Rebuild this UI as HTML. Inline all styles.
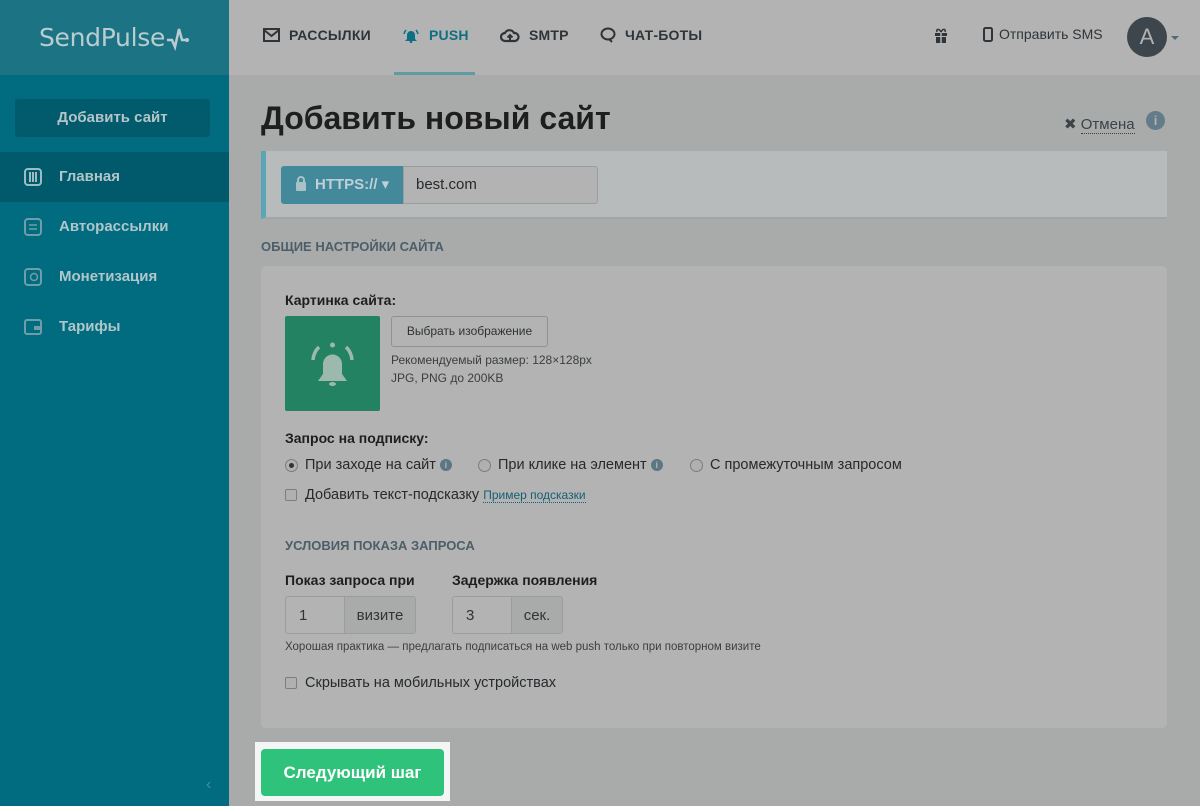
<!DOCTYPE html>
<html><head><meta charset="utf-8"><style>
*{box-sizing:border-box;margin:0;padding:0}
body{width:1200px;height:806px;overflow:hidden;background:#a9abab;font-family:"Liberation Sans","DejaVu Sans",sans-serif;position:relative;color:#2b2b2b}
.side{position:absolute;left:0;top:0;width:229px;height:806px;background:#016b7f}
.logo{height:75px;background:#1b7384;color:#b9cdd1;font-size:25px;font-family:"DejaVu Sans",sans-serif;display:flex;align-items:center;justify-content:center;letter-spacing:-.3px}
.addbtn{position:absolute;left:15px;top:99px;width:195px;height:38px;background:#025b6c;border-radius:3px;color:#b4c5c9;font-size:15px;font-weight:bold;text-align:center;line-height:38px}
.mi{position:absolute;left:0;width:229px;height:50px;line-height:50px;color:#b1c6ca;font-weight:bold;font-size:15px;padding-left:59px}
.mi svg{position:absolute;left:24px;top:16px}
.top{position:absolute;left:229px;top:0;width:971px;height:75px;background:#b3b3b3}
.nav{position:absolute;top:27px;font-size:14px;color:#2e3438;font-weight:bold;letter-spacing:.2px;display:flex;align-items:center}
.nav svg{margin-right:9px}
.title{position:absolute;left:261px;top:100px;font-size:32px;font-weight:bold;color:#1e1e1e}
.card{position:absolute;background:#b3b3b3;border-radius:5px}
.lbl{position:absolute;font-size:14px;font-weight:bold;color:#1e1e1e}
.t{position:absolute;font-size:14.5px;color:#262a2c}
.sm{position:absolute;font-size:12px;color:#3a3e40}
.cb{position:absolute;width:12px;height:12px;border:1px solid #7b7d7e;border-radius:2px;background:#b0b0b0}
.rd{position:absolute;width:13px;height:13px;border:1px solid #7b7d7e;border-radius:50%;background:#b0b0b0}
.box{position:absolute;border:1px solid #9a9c9d;border-radius:3px;height:38px;display:flex;font-size:15px}
.box span{display:flex;align-items:center}
.info{display:inline-block;width:12px;height:12px;border-radius:50%;background:#5d7684;color:#b3b3b3;font-size:9px;font-weight:bold;text-align:center;line-height:12px;vertical-align:1px}
</style></head><body>
<div class="side">
<div class="logo">SendPulse<svg width="24" height="26" viewBox="0 0 24 26" style="margin-left:1px"><path d="M1 15h5l3 7 4-18 3 11h4" stroke="#b9cdd1" stroke-width="2.5" fill="none"/><circle cx="21" cy="15" r="2" fill="#b9cdd1"/></svg></div>
<div class="addbtn">Добавить сайт</div>
<div class="mi" style="top:152px;background:#015a6b"><svg width="18" height="18"><rect x="1" y="1" width="16" height="16" rx="3" fill="none" stroke="#9dbcc2" stroke-width="2"/><path d="M6 4v10M9 4v10M12 4v10" stroke="#9dbcc2" stroke-width="2"/></svg>Главная</div>
<div class="mi" style="top:202px"><svg width="18" height="18"><rect x="1" y="1" width="16" height="16" rx="3" fill="none" stroke="#6f9ea8" stroke-width="2"/><path d="M5 7h8M5 11h8" stroke="#6f9ea8" stroke-width="1.5"/></svg>Авторассылки</div>
<div class="mi" style="top:252px"><svg width="18" height="18"><rect x="1" y="1" width="16" height="16" rx="3" fill="none" stroke="#6f9ea8" stroke-width="2"/><circle cx="10" cy="9" r="3.5" fill="none" stroke="#6f9ea8" stroke-width="1.5"/></svg>Монетизация</div>
<div class="mi" style="top:302px"><svg width="18" height="18"><rect x="1" y="2" width="16" height="14" rx="2" fill="none" stroke="#6f9ea8" stroke-width="2"/><path d="M10 8h7v4h-7z" fill="#6f9ea8"/></svg>Тарифы</div>
<div style="position:absolute;left:206px;top:776px;color:#4f8d99;font-size:16px">‹</div>
</div>
<div class="top">
<div class="nav" style="left:34px"><svg width="17" height="14"><rect x="1" y="1" width="15" height="12" fill="none" stroke="#2e3438" stroke-width="2"/><path d="M1 2l7.5 6L16 2" fill="none" stroke="#2e3438" stroke-width="2"/></svg>РАССЫЛКИ</div>
<div class="nav" style="left:173px;color:#0d6f83"><svg width="18" height="16"><path d="M5 12V8a4 4 0 0 1 8 0v4l2 2H3z" fill="#0d6f83"/><circle cx="9" cy="15" r="1.3" fill="#0d6f83"/><path d="M2 7a8 8 0 0 1 2-4M16 7a8 8 0 0 0-2-4" stroke="#0d6f83" stroke-width="1.5" fill="none"/></svg>PUSH</div>
<div style="position:absolute;left:165px;top:72px;width:81px;height:3px;background:#5f9aa5"></div>
<div class="nav" style="left:271px"><svg width="20" height="15"><path d="M5 13a4 4 0 0 1 0-8 5 5 0 0 1 9 0 4 4 0 0 1 1 8z" fill="none" stroke="#2e3438" stroke-width="2.2"/><path d="M10 13V7M7.5 9.5L10 7l2.5 2.5" stroke="#2e3438" stroke-width="2" fill="none"/></svg>SMTP</div>
<div class="nav" style="left:371px"><svg width="16" height="16"><ellipse cx="8" cy="7" rx="6.5" ry="5.5" fill="none" stroke="#2e3438" stroke-width="2"/><path d="M9 12l3 3" stroke="#2e3438" stroke-width="2"/></svg>ЧАТ-БОТЫ</div>
<svg style="position:absolute;left:704px;top:26px" width="16" height="18"><path d="M2 7h12v3H2zM3 11h10v6H3z" fill="#2e3438"/><path d="M8 7v10" stroke="#b3b3b3" stroke-width="1.5"/><path d="M8 6C6 2 3 3 4 6M8 6c2-4 5-3 4 0" stroke="#2e3438" stroke-width="1.5" fill="none"/></svg>
<div style="position:absolute;left:754px;top:26px;font-size:14px;color:#2e3438;display:flex;align-items:center"><svg width="10" height="15" style="margin-right:6px"><rect x="1" y="1" width="8" height="13" rx="1.5" fill="none" stroke="#2e3438" stroke-width="2"/></svg>Отправить SMS</div>
<div style="position:absolute;left:898px;top:17px;width:40px;height:40px;border-radius:50%;background:#3c464c;color:#b3b3b3;font-size:22px;text-align:center;line-height:40px">A</div>
<div style="position:absolute;left:942px;top:36px;border:4px solid transparent;border-top-color:#4f6b79"></div>
</div>
<div class="title">Добавить новый сайт</div>
<div style="position:absolute;left:1064px;top:115px;font-size:15px;color:#3c4245"><b>✖</b> <span style="border-bottom:1px dotted #3c4245">Отмена</span></div>
<div style="position:absolute;left:1146px;top:111px;width:19px;height:19px;border-radius:50%;background:#627c8a;color:#b3b3b3;font-weight:bold;text-align:center;font-size:13px;line-height:19px">i</div>
<div style="position:absolute;left:261px;top:151px;width:906px;height:68px;background:#b7bbbc;border-left:5px solid #5aa5b6;border-bottom:2px solid #a3a6a7"></div>
<div style="position:absolute;left:281px;top:166px;width:122px;height:38px;background:#42899b;border-radius:3px 0 0 3px;color:#c0d0d4;font-weight:bold;font-size:15px;line-height:38px;padding-left:34px">HTTPS:// ▾</div>
<svg style="position:absolute;left:295px;top:175px" width="12" height="17"><path d="M3 7V5a3 3 0 0 1 6 0v2" stroke="#a9c1c7" stroke-width="2" fill="none"/><rect x="1" y="7" width="10" height="9" rx="1" fill="#a9c1c7"/></svg>
<div style="position:absolute;left:403px;top:166px;width:195px;height:38px;border:1px solid #9a9c9d;border-radius:0 3px 3px 0;background:#b3b3b3;font-size:15px;line-height:36px;padding-left:12px;color:#262a2c">best.com</div>
<div style="position:absolute;left:261px;top:239px;font-size:13px;color:#4c5e68;font-weight:bold">ОБЩИЕ НАСТРОЙКИ САЙТА</div>
<div class="card" style="left:261px;top:266px;width:906px;height:462px"></div>
<div class="lbl" style="left:285px;top:292px">Картинка сайта:</div>
<div style="position:absolute;left:285px;top:316px;width:95px;height:95px;background:#238262;border-radius:2px"><svg width="95" height="95"><path d="M38 48a9.5 9.5 0 0 1 19 0v10l5 7H33l5-7z" fill="#9db9ae"/><ellipse cx="47.5" cy="68" rx="3.5" ry="2" fill="#9db9ae"/><path d="M28 44a20 20 0 0 1 6-13M67 44a20 20 0 0 0-6-13" stroke="#9db9ae" stroke-width="3.5" fill="none"/><circle cx="47.5" cy="29" r="2.5" fill="#9db9ae"/></svg></div>
<div style="position:absolute;left:391px;top:316px;width:157px;height:31px;border:1px solid #8f9293;border-radius:3px;font-size:12px;line-height:29px;text-align:center;color:#2e3234">Выбрать изображение</div>
<div class="sm" style="left:391px;top:353px">Рекомендуемый размер: 128×128px</div>
<div class="sm" style="left:391px;top:371px">JPG, PNG до 200KB</div>
<div class="lbl" style="left:285px;top:430px">Запрос на подписку:</div>
<div class="rd" style="left:285px;top:459px"><div style="width:5px;height:5px;border-radius:50%;background:#333;margin:3px"></div></div>
<div class="t" style="left:305px;top:457px">При заходе на сайт <span class="info">i</span></div>
<div class="rd" style="left:478px;top:459px"></div>
<div class="t" style="left:498px;top:457px">При клике на элемент <span class="info">i</span></div>
<div class="rd" style="left:690px;top:459px"></div>
<div class="t" style="left:710px;top:457px">С промежуточным запросом</div>
<div class="cb" style="left:285px;top:489px"></div>
<div class="t" style="left:305px;top:487px">Добавить текст-подсказку <span style="font-size:12px;color:#145f74;border-bottom:1px dotted #145f74">Пример подсказки</span></div>
<div style="position:absolute;left:285px;top:538px;font-size:13px;color:#4c5e68;font-weight:bold">УСЛОВИЯ ПОКАЗА ЗАПРОСА</div>
<div class="lbl" style="left:285px;top:572px">Показ запроса при</div>
<div class="lbl" style="left:452px;top:572px">Задержка появления</div>
<div class="box" style="left:285px;top:596px;width:131px"><span style="width:58px;padding-left:13px;color:#333">1</span><span style="flex:1;background:#a9abab;border-left:1px solid #9a9c9d;justify-content:center;color:#333">визите</span></div>
<div class="box" style="left:452px;top:596px;width:111px"><span style="width:58px;padding-left:13px;color:#333">3</span><span style="flex:1;background:#a9abab;border-left:1px solid #9a9c9d;justify-content:center;color:#333">сек.</span></div>
<div class="sm" style="left:285px;top:641px;font-size:11.5px">Хорошая практика — предлагать подписаться на web push только при повторном визите</div>
<div class="cb" style="left:285px;top:677px"></div>
<div class="t" style="left:305px;top:675px">Скрывать на мобильных устройствах</div>
<div style="position:absolute;left:255px;top:742px;width:195px;height:59px;background:#f4f6f6"></div>
<div style="position:absolute;left:261px;top:749px;width:183px;height:47px;background:#2fc27a;border-radius:4px;color:#fff;font-weight:bold;font-size:17px;text-align:center;line-height:47px">Следующий шаг</div>
</body></html>
